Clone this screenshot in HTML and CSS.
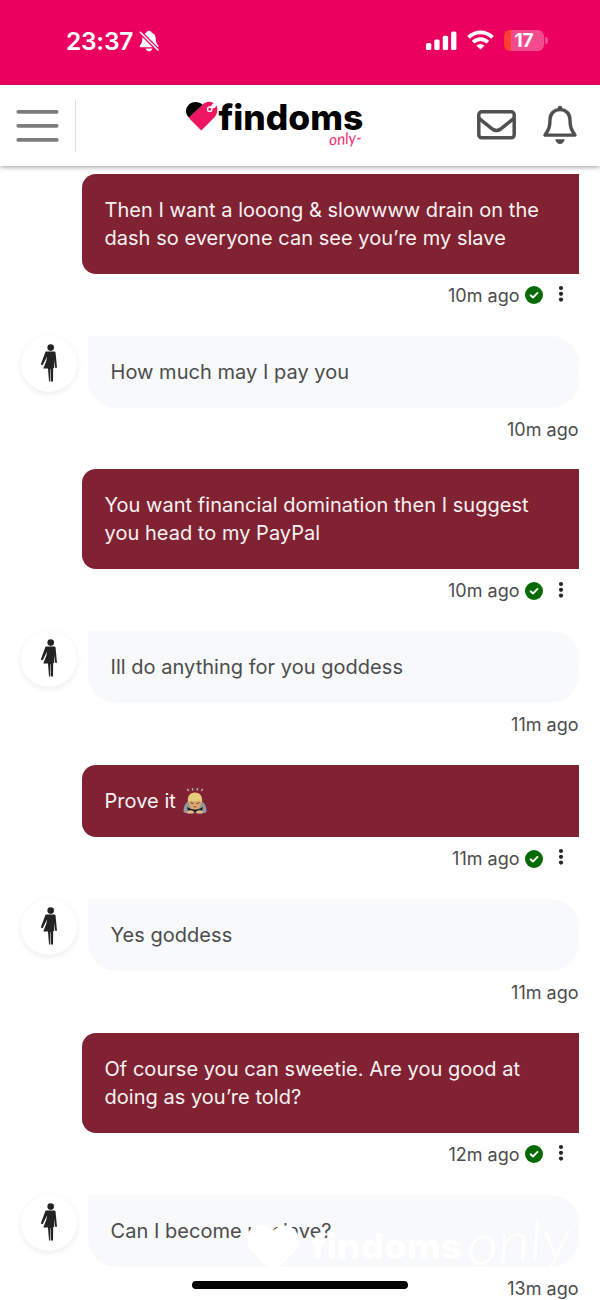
FILE: index.html
```html
<!DOCTYPE html>
<html lang="en">
<head>
<meta charset="utf-8">
<title>findoms only</title>
<link rel="stylesheet" href="styles.css">
</head>
<body>
<svg class="defs" aria-hidden="true">
  <symbol id="person" viewBox="0 0 18 40">
    <circle cx="10.7" cy="3.6" r="3.3"/>
    <path d="M6 7.6H14.4Q15.5 7.6 15.6 9L17 23.8H15.2L14.2 16L14.2 24H13.2L13 37.6H10.7L10.5 25H10.1L9.9 37.6H9L8 24.6H3.3L6.4 16.5L7 12.5L2.7 21.3L.8 20.4L5.2 8.5Q5.5 7.6 6 7.6Z"/>
  </symbol>
  <symbol id="check" viewBox="0 0 18 18">
    <circle cx="9" cy="9" r="9" fill="#046a04"/>
    <path d="M5.6 9.3L8 11.5L12.5 6.9" fill="none" stroke="#fff" stroke-width="1.9" stroke-linecap="round" stroke-linejoin="round"/>
  </symbol>
  <symbol id="dots" viewBox="0 0 6 18">
    <circle cx="3" cy="3" r="2.1"/><circle cx="3" cy="8.8" r="2.1"/><circle cx="3" cy="14.6" r="2.1"/>
  </symbol>
</svg>

<div class="status">
  <span class="clock">23:37</span>
  <svg class="mute" viewBox="0 0 20 22">
    <path d="M10 .8C11.4.8 12.3 1.6 12.5 2.6C15.4 3.6 16.6 5.8 16.7 8.6C16.8 12.4 17.7 13.6 19 15.2C19.8 16.3 19.3 17.3 18 17.3H2.1C.8 17.3.3 16.3 1.1 15.2C2.4 13.6 3.2 12.4 3.3 8.6C3.4 5.8 4.6 3.6 7.5 2.6C7.7 1.6 8.6.8 10 .8Z"/>
    <path d="M6.7 18.6H13.3C12.9 20.3 11.6 21.3 10 21.3S7.1 20.3 6.7 18.6Z"/>
    <path d="M1.5 2.4L18.8 19.9" stroke="#ec005f" stroke-width="4"/>
    <path d="M1.3 2.2L19 20" stroke="#fff" stroke-width="1.5" stroke-linecap="round"/>
  </svg>
  <svg class="signal" viewBox="0 0 31 20">
    <rect x="0" y="12" width="5.3" height="7" rx="1.5"/><rect x="8.3" y="8.6" width="5.3" height="10.4" rx="1.5"/><rect x="16.8" y="4.8" width="5.3" height="14.2" rx="1.5"/><rect x="25.1" y=".5" width="5.3" height="18.5" rx="1.5"/>
  </svg>
  <svg class="wifi" viewBox="0 0 28 20">
    <g fill="none" stroke="#fff" stroke-width="3.9"><path d="M1.6 7.2Q7 2 14 2T26.4 7.2"/><path d="M6.3 12.2Q9.8 9 14 9T21.7 12.2"/></g>
    <path d="M9.8 15.7Q14 12.4 18.2 15.7L14 19.8Z"/>
  </svg>
  <div class="battery"><span>17</span></div>
</div>

<header class="bar">
  <svg class="menu" viewBox="0 0 44 34"><path d="M2.3 2.8H40.7M2.3 16.8H40.7M2.3 30.9H40.7"/></svg>
  <div class="rule"></div>
  <svg class="brand" viewBox="0 0 182 56">
    <path d="M15.3 34.4L2.6 21.7L16.6 8.4C20 5.4 24 5 27.4 7L24.5 10.6L28.2 11.4L30.6 9.6C32 13.5 31.4 18.2 28.4 21.4Z" fill="#ef1761"/>
    <path d="M3 21.6L16.6 8.7C12.8 5.2 7 5.2 3 8.4C-1 12-1 18 3 21.6Z"/>
    <circle cx="23.7" cy="13.2" r="2.2" fill="#ef1761" stroke="#fff" stroke-width="1.4"/>
    <path d="M24.8 11.4L27.2 8L28 10.4L31 8.6L28.8 12L26 12.6Z" fill="#fff"/>
    <text class="name" x="32.4" y="34" textLength="145" lengthAdjust="spacingAndGlyphs">findoms</text>
    <text class="script" transform="translate(143.5 49.6) rotate(-5)" textLength="27" lengthAdjust="spacingAndGlyphs">only</text>
    <path d="M171.5 42.8L174.6 42.4" stroke="#ef2d70" stroke-width="1.5"/>
  </svg>
  <svg class="mail" viewBox="0 0 40 30"><rect x="1.8" y="1.8" width="35.4" height="26" rx="3"/><path d="M2 8.3L15.4 19Q19.5 22 23.6 19L37 8.3"/></svg>
  <svg class="bell" viewBox="0 0 36 40">
    <path d="M18 4.6C11.8 4.6 8 9 8 14.7C8 22.5 6.5 25 3 30.1H33C29.5 25 28 22.5 28 14.7C28 9 24.2 4.6 18 4.6Z" fill="none" stroke="#50504e" stroke-width="3.4" stroke-linejoin="round"/>
    <path d="M15.7 4.5V3.1A2.3 2.3 0 0 1 20.3 3.1V4.5ZM13.2 34.3H22.8C22 37.5 20.2 39 18 39S14 37.5 13.2 34.3Z" fill="#50504e"/>
  </svg>
</header>

<main class="chat">
  <section class="sent"><p class="bubble">Then I want a looong &amp; slowwww drain on the<br>dash so everyone can see you’re my slave</p><div class="meta"><time>10m ago</time><svg class="check"><use href="#check"/></svg><svg class="dots"><use href="#dots"/></svg></div></section>
  <section class="received"><div class="avatar"><svg><use href="#person"/></svg></div><p class="bubble">How much may I pay you</p><div class="meta"><time>10m ago</time></div></section>
  <section class="sent"><p class="bubble">You want financial domination then I suggest<br>you head to my PayPal</p><div class="meta"><time>10m ago</time><svg class="check"><use href="#check"/></svg><svg class="dots"><use href="#dots"/></svg></div></section>
  <section class="received"><div class="avatar"><svg><use href="#person"/></svg></div><p class="bubble">Ill do anything for you goddess</p><div class="meta"><time>11m ago</time></div></section>
  <section class="sent"><p class="bubble">Prove it <svg class="bow" viewBox="0 0 24 26" role="img" aria-label="person bowing">
    <path d="M.5 24Q0 16 6 13H18Q24 16 23.5 24Q22 26 12 25Q2 26 .5 24Z" fill="#91979b"/>
    <path d="M4 19Q12 24 20 19L19 23Q12 26 5 23Z" fill="#1c1c1e"/>
    <path d="M6 14Q6 21.5 12 21.5T18 14V10H6Z" fill="#dda66f"/>
    <path d="M5 15C4 8 7 4.5 12 4.5S20 8 19 15L16.8 12.6Q11 13.8 7 12.6Z" fill="#e9cb7c"/>
    <path d="M7.5 14.6L10.5 15.7M16.5 14.6L13.5 15.7M10.5 18.7H13.5" stroke="#76512e" stroke-width="1.1"/>
    <path d="M4 23.5Q7 21 11 23.5L10 25.5H5ZM20 23.5Q17 21 13 23.5L14 25.5H19Z" fill="#e7b989"/>
    <path d="M4.2.8L5.8 3M9.3 0L10 2.5M14.7 0L14 2.5M19.8.8L18.2 3" stroke="#a8b0b6" stroke-width="1.4"/>
  </svg></p><div class="meta"><time>11m ago</time><svg class="check"><use href="#check"/></svg><svg class="dots"><use href="#dots"/></svg></div></section>
  <section class="received"><div class="avatar"><svg><use href="#person"/></svg></div><p class="bubble">Yes goddess</p><div class="meta"><time>11m ago</time></div></section>
  <section class="sent"><p class="bubble">Of course you can sweetie. Are you good at<br>doing as you’re told?</p><div class="meta"><time>12m ago</time><svg class="check"><use href="#check"/></svg><svg class="dots"><use href="#dots"/></svg></div></section>
  <section class="received"><div class="avatar"><svg><use href="#person"/></svg></div><p class="bubble">Can I become ur slave?</p><div class="meta"><time>13m ago</time></div></section>
</main>

<svg class="watermark" viewBox="0 0 350 80">
  <path d="M27 55L5 32C-2 22 1 11 10 8C18 5 23 9 27 13C34 6 42 6 48 11C55 18 53 28 48 34Z"/>
  <text class="name" x="65" y="41" textLength="151" lengthAdjust="spacingAndGlyphs">findoms</text>
  <text class="script" transform="translate(222 47) rotate(-4)" textLength="104" lengthAdjust="spacingAndGlyphs">only</text>
</svg>
<div class="home"></div>
</body>
</html>
```
FILE: styles.css
```css
* { box-sizing: border-box; }
body { margin: 0; width: 600px; height: 1300px; overflow: hidden; position: relative; background: #fff; font-family: Inter, "Liberation Sans", sans-serif; color: #4c4c4c; }
svg { display: block; flex: none; }
.defs { position: absolute; width: 0; height: 0; }

.status { height: 85px; background: #ec005f; color: #fff; fill: #fff; display: flex; padding-left: 66px; }
.clock { width: 72px; margin-top: 26px; font-size: 24.5px; line-height: 30px; font-weight: 600; letter-spacing: -.25px; white-space: nowrap; }
.mute { width: 20px; height: 22px; margin-top: 30px; margin-left: 1px; }
.signal { width: 31px; height: 20px; margin: 31px 0 0 267px; }
.wifi { width: 27px; height: 20px; margin: 30px 0 0 10px; }
.battery { position: relative; width: 40px; height: 21px; margin: 30px 0 0 10px; border-radius: 6px; background: linear-gradient(90deg, #ff3c30 7px, #f34b8d 7px); text-align: center; font-size: 19px; line-height: 21px; font-weight: 700; }
.battery::after { content: ""; position: absolute; left: 41px; top: 7px; width: 2.5px; height: 7px; border-radius: 0 3px 3px 0; background: #f34b8d; }

.bar { position: relative; z-index: 1; height: 81px; background: #fff; box-shadow: 0 1px 5px rgba(0,0,0,.4); display: flex; padding-left: 16px; }
.menu { width: 44px; height: 34px; margin-top: 24px; fill: none; stroke: #7c7c7c; stroke-width: 3.8; stroke-linecap: round; }
.rule { width: 1px; height: 52px; margin: 15px 0 0 15px; background: #e0e0e0; }
.brand { width: 182px; height: 56px; margin: 11px 0 0 110px; }
.name { font: 800 35px Inter, sans-serif; }
.script { font: italic 400 16px Lato, sans-serif; fill: #ef2d70; }
.mail { width: 40px; height: 30px; margin: 25px 0 0 109px; fill: none; stroke: #50504e; stroke-width: 3.5; }
.bell { width: 36px; height: 40px; margin: 20px 0 0 24.5px; }

.chat { padding: 7.7px 21px 0 20px; }
.sent { margin-left: 62px; }
.bubble { margin: 0; padding: 22px 22.5px; font-size: 20px; line-height: 28px; letter-spacing: .03px; white-space: nowrap; }
.sent .bubble { background: #802232; color: #f8f2f3; border-radius: 14px 0 0 14px; }
.meta { height: 61.9px; padding-top: 9px; display: flex; justify-content: flex-end; align-items: flex-start; font-size: 18px; line-height: 26px; }
.check { width: 18px; height: 18px; margin: 3.3px 15px 0 5.5px; }
.dots { width: 6px; height: 18px; margin: 2.2px 15px 0 0; fill: #262626; }
.received { display: grid; grid-template-columns: 68px 1fr; }
.received .bubble { background: #f7f9fb; border-radius: 0 28px 28px 28px; }
.received .meta { grid-column: 2; padding-right: .5px; }
.avatar { width: 56px; height: 56px; border-radius: 50%; box-shadow: 0 2px 6px rgba(0,0,0,.08); margin: 0 0 0 1px; padding: 8px 0 0 19px; }
.avatar svg { width: 18px; height: 40px; fill: #222; }
.bow { display: inline-block; width: 24px; height: 26px; vertical-align: -4px; margin: -4px 0 -4px 1px; position: relative; top: -2px; }

.watermark { position: absolute; left: 246px; top: 1218px; width: 350px; height: 80px; fill: #fff; }
.watermark .script { font-size: 56px; font-weight: 300; fill: #fff; }
.home { position: absolute; left: 192px; top: 1281px; width: 216px; height: 8px; border-radius: 4px; background: #000; }
```
